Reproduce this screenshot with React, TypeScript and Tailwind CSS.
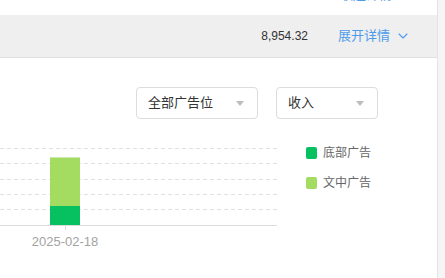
import { ChevronDown } from "lucide-react";

const font = { fontFamily: '"Liberation Sans", "Noto Sans CJK SC", sans-serif' };

function Select({ label, width }: { label: string; width: string }) {
  return (
    <div
      className={`${width} h-[32px] flex items-center justify-between pl-[11px] pr-[13px] border border-[#dcdcdc] rounded-[4px] bg-white`}
    >
      <span className="text-[13px] text-[#333]">{label}</span>
      <svg width="8" height="5" viewBox="0 0 8 5">
        <polygon points="0,0 8,0 4,5" fill="#bdbdbd" />
      </svg>
    </div>
  );
}

// stacked bar chart, a single day
function RevenueChart() {
  const grid = [8, 23, 39, 54, 69];
  return (
    <svg width="277" height="112" viewBox="0 0 277 112" className="block">
      {grid.map((y) => (
        <line
          key={y}
          x1="0"
          x2="277"
          y1={y + 0.5}
          y2={y + 0.5}
          stroke="#e0e0e0"
          strokeDasharray="4 3"
        />
      ))}
      <rect x="50" y="17" width="30" height="1" fill="#c9ebb0" />
      <rect x="50" y="18" width="30" height="48" fill="#a3dc60" />
      <rect x="50" y="66" width="30" height="19" fill="#07c160" />
      <line x1="0" x2="277" y1="85.5" y2="85.5" stroke="#dcdcdc" />
      <line x1="65.5" x2="65.5" y1="86" y2="90" stroke="#dcdcdc" />
      <text
        x="65"
        y="106"
        textAnchor="middle"
        fontSize="13"
        fill="#a3a3a3"
        style={font}
      >
        2025-02-18
      </text>
    </svg>
  );
}

export default function App() {
  const legend = [
    { label: "底部广告", color: "bg-[#07c160]" },
    { label: "文中广告", color: "bg-[#a3dc60]" },
  ];

  return (
    <div className="flex w-[445px] h-[278px] overflow-hidden bg-white" style={font}>
      <div className="w-[437px] flex flex-col">
        {/* previous row, scrolled mostly out of view */}
        <div className="h-[15px] overflow-hidden flex justify-end items-start pr-[45px]">
          <div className="-mt-[15px] text-[13px] leading-[19px] text-[#4e9bea]">
            收起详情
          </div>
        </div>

        <div className="h-[43px] bg-[#efefef] border-b border-[#e0e0e0] flex items-center justify-end pr-[26px]">
          <span className="text-[12px] text-[#333] mr-[30px]">8,954.32</span>
          <span className="text-[13px] text-[#4e9bea]">展开详情</span>
          <ChevronDown size={16} strokeWidth={1.6} className="text-[#4e9bea] ml-[5px]" />
        </div>

        <div className="flex gap-[18px] pl-[136px] mt-[29px]">
          <Select label="全部广告位" width="w-[122px]" />
          <Select label="收入" width="w-[102px]" />
        </div>

        <div className="flex mt-[21px]">
          <RevenueChart />
          <div className="flex flex-col gap-[18px] ml-[29px] mt-[7px]">
            {legend.map((item) => (
              <div key={item.label} className="flex items-center gap-[6px] h-[12px]">
                <span className={`w-[11px] h-[12px] rounded-[2px] ${item.color}`} />
                <span className="text-[12px] text-[#666]">{item.label}</span>
              </div>
            ))}
          </div>
        </div>
      </div>
      <div className="w-[8px] h-full bg-[#f5f5f5] border-l border-[#e3e3e3]" />
    </div>
  );
}
